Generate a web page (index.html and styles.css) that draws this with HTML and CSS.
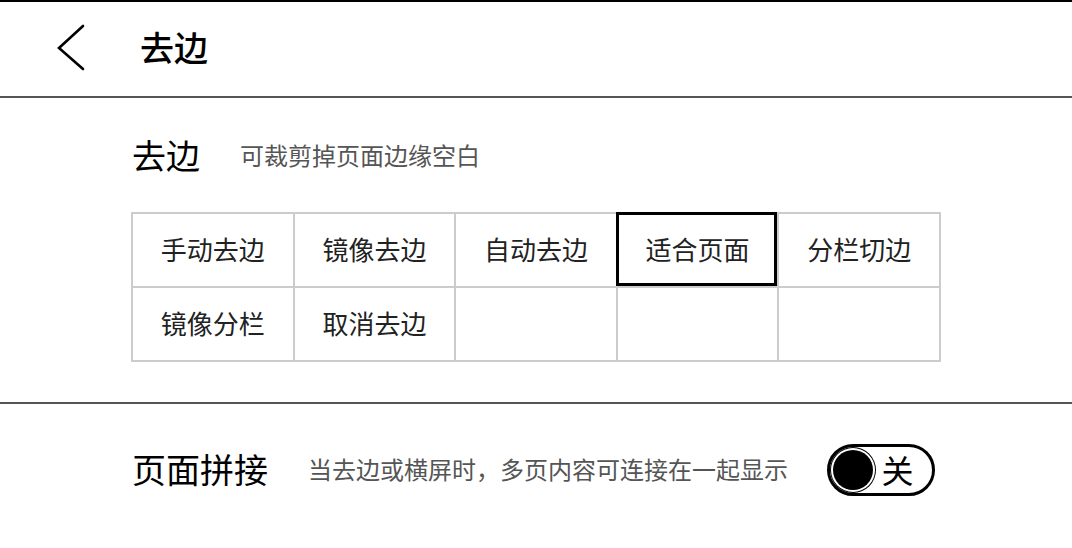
FILE: index.html
```html
<!DOCTYPE html>
<html lang="zh-CN">
  <head>
    <meta charset="UTF-8" />
    <meta name="viewport" content="width=device-width, initial-scale=1.0" />
    <title>去边</title>
    <link rel="stylesheet" href="styles.css">
  </head>
  <body>
    <!-- Header -->
    <div class="topbar">
      <button class="back-button">
        <svg width="40" height="60" viewBox="0 0 40 60">
          <polyline points="33,9 9,31 33,52" fill="none" stroke="#000" stroke-width="2.6" stroke-linecap="round" stroke-linejoin="miter" />
        </svg>
      </button>
      <h1 class="topbar-title">去边</h1>
    </div>

    <!-- Crop section -->
    <div class="section crop-section">
      <div class="section-head">
        <span class="section-title">去边</span>
        <span class="section-desc">可裁剪掉页面边缘空白</span>
      </div>
      <div class="mode-grid">
        <div class="mode-cell">手动去边</div>
        <div class="mode-cell">镜像去边</div>
        <div class="mode-cell">自动去边</div>
        <div class="mode-cell selected">适合页面</div>
        <div class="mode-cell">分栏切边</div>
        <div class="mode-cell">镜像分栏</div>
        <div class="mode-cell">取消去边</div>
        <div class="mode-cell"></div>
        <div class="mode-cell"></div>
        <div class="mode-cell"></div>
      </div>
    </div>

    <!-- Join section -->
    <div class="section join-section">
      <div class="section-head">
        <span class="section-title join-title">页面拼接</span>
        <span class="section-desc">当去边或横屏时，多页内容可连接在一起显示</span>
        <div class="toggle">
          <span class="toggle-knob"></span>
          <span class="toggle-label">关</span>
        </div>
      </div>
    </div>
  </body>
</html>
```

FILE: styles.css
```css
body {
  margin: 0;
  font-family: "Noto Sans CJK SC", "Noto Sans", sans-serif;
  background-color: #fff;
  color: #000;
}
.topbar {
  height: 94px;
  border-top: 2px solid #000;
  border-bottom: 2px solid #555;
  display: flex;
  align-items: center;
}
.back-button {
  margin-left: 50px;
  margin-bottom: 4px;
  padding: 0;
  border: none;
  background: none;
  width: 40px;
  height: 60px;
  display: flex;
}
.topbar-title {
  margin: 0 0 4px 50px;
  font-size: 34px;
  font-weight: 500;
  line-height: 1;
}
.section {
  padding-left: 131px;
}
.crop-section {
  padding-top: 33px;
  padding-bottom: 40px;
  border-bottom: 2px solid #555;
}
.section-head {
  display: flex;
  align-items: center;
  height: 48px;
  padding-left: 1px;
}
.section-title {
  font-size: 34px;
  line-height: 1;
}
.section-desc {
  margin-left: 40px;
  font-size: 24px;
  line-height: 1;
  color: #555;
}
.mode-grid {
  margin-top: 33px;
  width: 808px;
  display: grid;
  grid-template-columns: repeat(5, 1fr);
  grid-auto-rows: 74px;
  border-top: 2px solid #ccc;
  border-left: 2px solid #ccc;
}
.mode-cell {
  position: relative;
  border-right: 2px solid #ccc;
  border-bottom: 2px solid #ccc;
  display: flex;
  align-items: center;
  justify-content: center;
  padding-bottom: 4px;
  font-size: 26px;
  color: #222;
}
.mode-cell.selected::after {
  content: "";
  position: absolute;
  top: -2px;
  left: -2px;
  right: 0;
  bottom: 0;
  border: 3px solid #000;
}
.join-section {
  padding-top: 40px;
}
.join-section .section-head {
  height: 52px;
}
.join-title {
  font-size: 34px;
  margin-top: -2px;
}
.join-section .section-desc {
  margin-top: -2px;
}
.toggle {
  margin-left: 39px;
  width: 102px;
  height: 46px;
  border: 3px solid #000;
  border-radius: 26px;
  display: flex;
  align-items: center;
}
.toggle-knob {
  width: 40px;
  height: 40px;
  margin-left: 3px;
  border-radius: 50%;
  background-color: #000;
  box-shadow: 0 0 0 2px #fff, 0 0 0 3px #000;
}
.toggle-label {
  flex: 1;
  text-align: center;
  font-size: 32px;
  line-height: 1;
  padding-right: 10px;
  margin-top: -2px;
}
```
